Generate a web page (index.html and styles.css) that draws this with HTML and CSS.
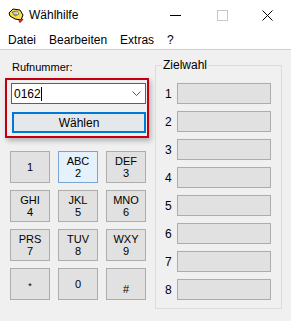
FILE: index.html
```html
<!DOCTYPE html>
<html lang="de">
<head>
    <meta charset="UTF-8">
    <title>Wählhilfe</title>
    <link rel="stylesheet" href="styles.css">
</head>
<body>
    <div class="window">
        <div class="titlebar">
            <svg class="app-icon" width="18" height="16" viewBox="0 0 18 16">
                <path d="M2 6 L6 2 L13 3 L16 8 L14 13 L8 12 L3 9 Z" fill="#f5e04a" stroke="#000" stroke-width="1"/>
                <path d="M5 5 L10 4 L12 7 L8 9 Z" fill="#fff" stroke="#555" stroke-width="0.8"/>
                <path d="M6 6 H10 M6.5 7.5 H10" stroke="#777" stroke-width="0.8"/>
                <path d="M12 13 L13 15 L16 12" fill="none" stroke="#d0102a" stroke-width="1.5"/>
            </svg>
            <span class="title">Wählhilfe</span>
            <div class="controls">
                <span class="ctl ctl-min"></span>
                <span class="ctl ctl-max"></span>
                <svg class="ctl-close" width="11" height="11" viewBox="0 0 11 11">
                    <path d="M0.5 0.5 L10.5 10.5 M10.5 0.5 L0.5 10.5" stroke="#000" stroke-width="1"/>
                </svg>
            </div>
        </div>

        <div class="menubar">
            <span>Datei</span>
            <span>Bearbeiten</span>
            <span>Extras</span>
            <span>?</span>
        </div>

        <div class="client">
            <div class="left">
                <div class="label">Rufnummer:</div>
                <div class="highlight">
                    <div class="combo">
                        <span class="combo-text">0162<span class="caret"></span></span>
                        <svg class="chevron" width="9" height="5" viewBox="0 0 9 5">
                            <path d="M0.5 0.5 L4.5 4.5 L8.5 0.5" fill="none" stroke="#555" stroke-width="1"/>
                        </svg>
                    </div>
                    <div class="dial-btn">Wählen</div>
                </div>

                <div class="keypad">
                    <div class="key">1</div>
                    <div class="key hover">ABC<br>2</div>
                    <div class="key">DEF<br>3</div>
                    <div class="key">GHI<br>4</div>
                    <div class="key">JKL<br>5</div>
                    <div class="key">MNO<br>6</div>
                    <div class="key">PRS<br>7</div>
                    <div class="key">TUV<br>8</div>
                    <div class="key">WXY<br>9</div>
                    <div class="key star">*</div>
                    <div class="key">0</div>
                    <div class="key hash">#</div>
                </div>
            </div>

            <div class="group">
                <span class="group-title">Zielwahl</span>
                <div class="speed-row"><span class="num">1</span><div class="field"></div></div>
                <div class="speed-row"><span class="num">2</span><div class="field"></div></div>
                <div class="speed-row"><span class="num">3</span><div class="field"></div></div>
                <div class="speed-row"><span class="num">4</span><div class="field"></div></div>
                <div class="speed-row"><span class="num">5</span><div class="field"></div></div>
                <div class="speed-row"><span class="num">6</span><div class="field"></div></div>
                <div class="speed-row"><span class="num">7</span><div class="field"></div></div>
                <div class="speed-row"><span class="num">8</span><div class="field"></div></div>
            </div>
        </div>
    </div>
</body>
</html>
```

FILE: styles.css
```css
* {
    margin: 0;
    padding: 0;
    box-sizing: border-box;
}

body {
    font-family: 'Liberation Sans', Arial, sans-serif;
    font-size: 11px;
    color: #000;
    background: #f0f0f0;
    width: 291px;
    height: 321px;
    overflow: hidden;
}

.window {
    width: 291px;
    height: 321px;
    background: #f0f0f0;
}

.titlebar {
    height: 30px;
    background: #fff;
    display: flex;
    align-items: center;
    padding-left: 7px;
}

.app-icon {
    margin-right: 4px;
}

.title {
    font-size: 12px;
}

.controls {
    margin-left: auto;
    display: flex;
    align-items: center;
    height: 30px;
}

.ctl-min {
    width: 11px;
    height: 1px;
    background: #000;
    margin-right: 36px;
}

.ctl-max {
    width: 11px;
    height: 11px;
    border: 1px solid #c8c8c8;
    margin-right: 34px;
}

.ctl-close {
    margin-right: 18px;
}

.menubar {
    height: 20px;
    background: #fff;
    border-bottom: 1px solid #cfcfcf;
    display: flex;
    align-items: center;
    gap: 13px;
    padding-left: 8px;
    font-size: 12px;
}

.client {
    display: flex;
    gap: 6px;
    padding-left: 5px;
}

.left {
    width: 144px;
}

.label {
    margin: 10px 0 0 7px;
    line-height: 15px;
    height: 15px;
}

.highlight {
    margin-top: 3px;
    width: 144px;
    border: 2px solid #c40010;
    padding: 3px 0 3px 4px;
    box-shadow: 2px 3px 5px rgba(0, 0, 0, 0.25);
}

.combo {
    width: 135px;
    height: 21px;
    background: #fff;
    border: 1px solid #0078d7;
    display: flex;
    align-items: center;
    padding-left: 2px;
    font-size: 12px;
}

.caret {
    display: inline-block;
    width: 1px;
    height: 14px;
    background: #000;
    vertical-align: -3px;
}

.chevron {
    margin-left: auto;
    margin-right: 4px;
}

.dial-btn {
    margin: 8px 0 0 1px;
    width: 134px;
    height: 21px;
    border: 2px solid #0078d7;
    background: #e5e8eb;
    display: flex;
    align-items: center;
    justify-content: center;
    font-size: 12px;
}

.keypad {
    margin: 13px 0 0 5px;
    display: grid;
    grid-template-columns: repeat(3, 40px);
    grid-auto-rows: 32px;
    column-gap: 8px;
    row-gap: 7px;
}

.key {
    background: #e1e1e1;
    border: 1px solid #adadad;
    display: flex;
    align-items: center;
    justify-content: center;
    text-align: center;
    line-height: 12px;
    font-size: 11px;
}

.key.hover {
    background: #e5f1fb;
    border-color: #7aa5d3;
}

.key.star {
    font-size: 9px;
    padding-top: 4px;
}

.key.hash {
    padding-top: 10px;
}

.group {
    position: relative;
    margin-top: 15px;
    width: 127px;
    height: 244px;
    border: 1px solid #dcdcdc;
    padding: 17px 0 0 9px;
    display: flex;
    flex-direction: column;
    gap: 7px;
}

.group-title {
    position: absolute;
    top: -8px;
    left: 6px;
    padding: 0 1px;
    background: #f0f0f0;
    font-size: 12px;
    line-height: 15px;
}

.speed-row {
    display: flex;
    align-items: center;
    height: 21px;
}

.num {
    width: 12px;
    font-size: 12px;
}

.field {
    width: 94px;
    height: 21px;
    background: #e1e1e1;
    border: 1px solid #adadad;
}
```
